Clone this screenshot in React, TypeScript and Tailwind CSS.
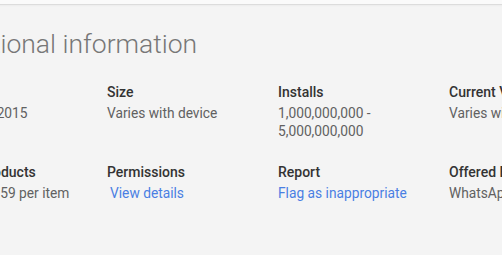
const rows = [
  [
    { label: 'Updated', value: ['August 4, 2015'] },
    { label: 'Size', value: ['Varies with device'] },
    { label: 'Installs', value: ['1,000,000,000 -', '5,000,000,000'] },
    { label: 'Current Version', value: ['Varies with device'] },
  ],
  [
    { label: 'In-app Products', value: ['$0.99 - $1.59 per item'] },
    { label: 'Permissions', link: 'View details', indent: true },
    { label: 'Report', link: 'Flag as inappropriate' },
    { label: 'Offered By', value: ['WhatsApp Inc.'] },
  ],
];

type Item = { label: string; value?: string[]; link?: string; indent?: boolean };

const MetaInfo = ({ item }: { item: Item }) => (
  <div className="w-[171px] shrink-0">
    <div className="text-[14px] leading-[20px] font-medium text-[#333333] whitespace-nowrap">{item.label}</div>
    <div className="mt-[2px]">
      {item.value &&
        item.value.map((v) => (
          <div key={v} className="text-[13.75px] leading-[18px] text-[#616161] whitespace-nowrap">
            {v}
          </div>
        ))}
      {item.link && (
        <a
          href="#"
          className={`block text-[13.75px] leading-[18px] text-[#4a7fe3] whitespace-nowrap ${item.indent ? 'pl-[3px]' : ''}`}
        >
          {item.link}
        </a>
      )}
    </div>
  </div>
);

export default function App() {
  return (
    <div
      className="w-[502px] h-[255px] overflow-hidden bg-[#f4f4f4]"
      style={{ fontFamily: 'Roboto, "Liberation Sans", sans-serif' }}
    >
      <div className="h-[4px] bg-[#fafafa]" />
      <div className="h-[1px] bg-[#dcdcdc]" />
      <div className="h-[2px] bg-gradient-to-b from-[#ececec] to-[#f4f4f4]" />
      <div className="ml-[-64px]">
        <h2 className="ml-[4px] mt-[20px] text-[26.5px] leading-[34px] font-light text-[#777777] whitespace-nowrap">
          Additional information
        </h2>
        <div className="mt-[21px] flex flex-col gap-[22px]">
          {rows.map((row, i) => (
            <div key={i} className="flex">
              {row.map((item) => (
                <MetaInfo key={item.label} item={item} />
              ))}
            </div>
          ))}
        </div>
      </div>
    </div>
  );
}
